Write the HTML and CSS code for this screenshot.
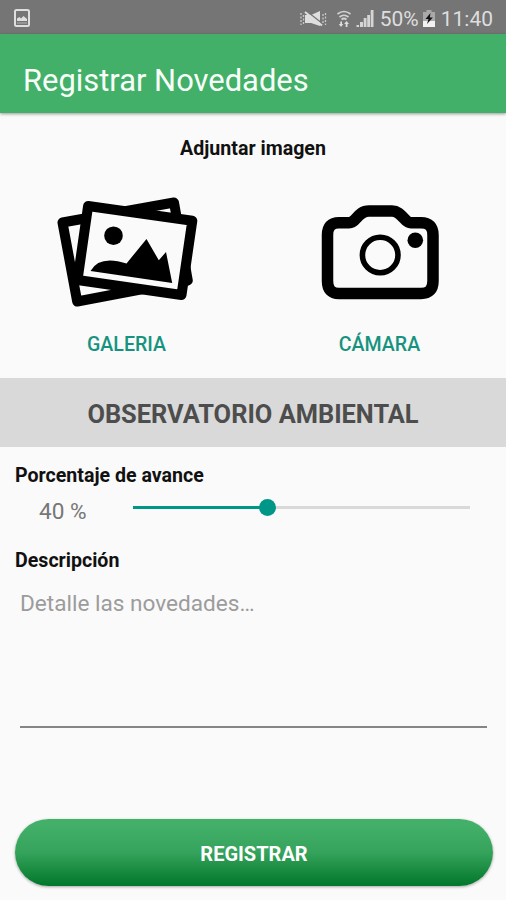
FILE: index.html
```
<!DOCTYPE html>
<html lang="es">
<head>
    <meta charset="UTF-8">
    <meta name="viewport" content="width=device-width, initial-scale=1.0">
    <title>Registrar Novedades</title>
    <link rel="stylesheet" href="styles.css">
</head>
<body>
    <div class="status-bar">
        <svg class="status-image" width="16" height="18" viewBox="0 0 16 18">
            <rect x="1" y="1" width="14" height="16" rx="1.5" fill="none" stroke="#dedede" stroke-width="2"/>
            <path d="M3 12 V9.500 L5.500 8 L7 9.500 L9.500 7 L13 10 V12 Z" fill="#dedede"/>
            <path d="M3 14 H13" stroke="#b5b5b5"/>
        </svg>
        <div class="status-right">
            <svg class="status-mute" width="27" height="18" viewBox="0 0 27 18">
                <path d="M5 5 H11 L20 1 V16 L11 13 H5 Z" fill="#dedede"/>
                <path d="M7 1.500 L23 14" stroke="#757575" stroke-width="1.500"/>
                <path d="M5 2 L22 15.500" stroke="#dedede" stroke-width="2"/>
                <path d="M1 3 V15 M3.500 5 V14 M23 4 V13 M25.500 3 V15" stroke="#c9c9c9" stroke-width="1.300" stroke-dasharray="2 1.500"/>
            </svg>
            <svg class="status-wifi" width="16" height="18" viewBox="0 0 16 18">
                <path d="M1.500 4 Q8 -1 14.500 4 M3.500 7 Q8 3.500 12.500 7 M5.500 9.500 Q8 7.500 10.500 9.500" fill="none" stroke="#d2d2d2" stroke-width="1.700"/>
                <path d="M5 17 L2.800 14 H4.300 V11.500 H6 V14 H7.300 Z M10.500 11 L13 14 H11.500 V17 H9.700 V14 H8.200 Z" fill="#dedede"/>
            </svg>
            <svg class="status-signal" width="18" height="18" viewBox="0 0 18 18">
                <path d="M0.500 15 H3 V17 H0.500 Z M4 12 H7 V17 H4 Z M7.700 8 H10.500 V17 H7.700 Z M11.200 5 H14 V17 H11.200 Z M14.700 0 H17.500 V17 H14.700 Z" fill="#d5d5d5"/>
            </svg>
            <span class="status-percent">50%</span>
            <svg class="status-battery" width="12" height="17" viewBox="0 0 12 17">
                <path d="M0 2 H3.500 V0 H8.500 V2 H12 V17 H0 Z" fill="#a9a9a9"/>
                <path d="M0 11 H12 V17 H0 Z" fill="#f2f2f2"/>
                <path d="M7.500 3 L2.500 9 H5.500 L4 14 L9.800 7.500 H6.800 Z" fill="#111"/>
            </svg>
            <span class="status-time">11:40</span>
        </div>
    </div>

    <header class="app-bar">
        <h1>Registrar Novedades</h1>
    </header>

    <main>
        <h2 class="attach-title">Adjuntar imagen</h2>
        <div class="attach-options">
            <div class="option">
                <svg width="170" height="140" viewBox="1.500 0 170 140">
                    <g fill="none" stroke="#000" stroke-width="10" stroke-linejoin="round">
                        <path d="M22 37.500 L133.500 17.500 L147.300 95.500 L36.700 116.500 Z"/>
                        <path d="M47.600 21 L151.800 35.800 L141 110 L37 95 Z" fill="#fafafa"/>
                    </g>
                    <circle cx="73" cy="50.700" r="9.300"/>
                    <path d="M50 86 Q59 70 86 78.500 L106 54 L118.300 75.300 L125.500 67 L131.700 98 Z"/>
                </svg>
                <a class="option-label">GALERIA</a>
            </div>
            <div class="option">
                <svg width="150" height="140" viewBox="0 0 150 140">
                    <path d="M22.500 50 Q22.500 37.700 34 37.700 H44 C52 37.700 52 26 64 26 H87 C97 26 99 37.700 106 37.700 H116 Q128 37.700 128 50 V96 Q128 108.500 116 108.500 H34 Q22.500 108.500 22.500 96 Z" fill="none" stroke="#000" stroke-width="11.500"/>
                    <circle cx="75.200" cy="70" r="17.800" fill="none" stroke="#000" stroke-width="5.600"/>
                    <circle cx="110.300" cy="55.300" r="7.800"/>
                </svg>
                <a class="option-label">CÁMARA</a>
            </div>
        </div>

        <div class="project-name">OBSERVATORIO AMBIENTAL</div>

        <form class="report-form">
            <h3 class="progress-title">Porcentaje de avance</h3>
            <div class="progress-row">
                <span class="progress-value">40 %</span>
                <div class="slider">
                    <div class="slider-fill" style="width: 40%"></div>
                    <div class="slider-thumb"></div>
                    <div class="slider-rest"></div>
                </div>
            </div>
            <h3 class="description-title">Descripción</h3>
            <div class="description-input"><span>Detalle las novedades…</span></div>
            <button type="button" class="submit-button"><span>REGISTRAR</span></button>
        </form>
    </main>
</body>
</html>
```
FILE: styles.css
```
* {
    box-sizing: border-box;
}

body {
    margin: 0;
    height: 900px;
    overflow: hidden;
    background: #fafafa;
    color: #111;
    font-family: Roboto, sans-serif;
}

h1, h2, h3 {
    margin: 0;
}

.status-bar {
    height: 34px;
    padding: 0 13px 0 14px;
    display: flex;
    align-items: center;
    justify-content: space-between;
    background: #757575;
    color: #dedede;
    font-size: 21px;
    line-height: 34px;
}

.status-right {
    display: flex;
    align-items: center;
    padding-top: 3px;
}

.status-image {
    margin-top: 2px;
}

.status-wifi {
    margin-left: 9px;
}

.status-signal {
    margin-left: 4px;
}

.status-percent {
    margin-left: 6px;
}

.status-battery {
    margin: 0 6px 0 4px;
}

.app-bar {
    height: 79px;
    padding: 14px 23px 0;
    display: flex;
    align-items: center;
    background: #42b068;
    box-shadow: 0 1px 3px rgba(0, 0, 0, 0.4);
}

.app-bar h1 {
    color: #f8fff9;
    font-size: 30.9px;
    font-weight: 400;
}

.attach-title {
    height: 72px;
    font-size: 19.6px;
    font-weight: 700;
    line-height: 71px;
    text-align: center;
}

.attach-options {
    height: 193px;
    display: grid;
    grid-template-columns: 1fr 1fr;
}

.option {
    display: flex;
    flex-direction: column;
    align-items: center;
}

.option-label {
    color: #16937f;
    font-size: 19.6px;
    font-weight: 500;
    line-height: 40px;
}

.project-name {
    height: 69px;
    background: #d9d9d9;
    color: #4d4d4d;
    font-size: 25.4px;
    font-weight: 700;
    line-height: 72px;
    text-align: center;
}

.report-form {
    padding: 15px 13px 0 15px;
}

.report-form h3 {
    font-size: 19.6px;
    font-weight: 700;
    line-height: 27px;
}

.progress-row {
    height: 44px;
    display: flex;
}

.progress-value {
    width: 118px;
    padding-left: 24px;
    color: #777;
    font-size: 22.6px;
    line-height: 46px;
}

.slider {
    width: 337px;
    height: 37px;
    display: flex;
    align-items: center;
}

.slider-fill {
    height: 3px;
    background: #009688;
}

.slider-thumb {
    width: 17px;
    height: 17px;
    margin: 0 -8px 0 -9px;
    border-radius: 50%;
    background: #009688;
    z-index: 1;
}

.slider-rest {
    flex: 1;
    height: 3px;
    background: #d9d9d9;
}

.description-title {
    padding-top: 14px;
}

.description-input {
    height: 154px;
    margin: 0 6px 0 5px;
    padding-top: 14px;
    border-bottom: 2px solid #858585;
    color: #9c9c9c;
    font-size: 22.6px;
    line-height: 32px;
}

.submit-button {
    width: 478px;
    height: 67px;
    margin-top: 91px;
    padding: 2px 0 0;
    border: 0;
    border-radius: 34px;
    background: linear-gradient(#42b068 10%, #35a35b 50%, #04792d 97%);
    box-shadow: 0 1px 3px rgba(0, 0, 0, 0.35);
    color: #fff;
    font-family: inherit;
    font-size: 20px;
    font-weight: 700;
}
```
